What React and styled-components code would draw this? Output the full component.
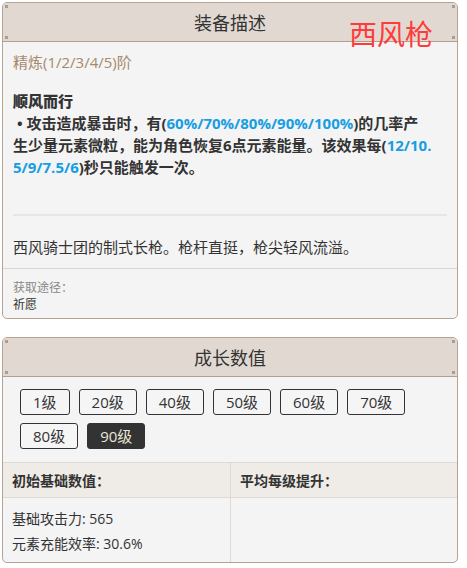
import styled, { createGlobalStyle } from "styled-components";

const GlobalStyle = createGlobalStyle`
    body {
        margin: 0;
        background: #fff;
        font-family: "Open Sans", "Noto Sans CJK SC", sans-serif;
        color: #333;
    }
`;

const levels = ["1级", "20级", "40级", "50级", "60级", "70级", "80级", "90级"];

const Panel = function ({ title, children }) {
    return <Card>
        <Header>
            <Dot $top $left />
            <Dot $left />
            <Dot $top />
            <Dot />
            {title}
        </Header>
        {children}
    </Card>
}

const App = function () {
    const active = "90级";

    return <Page>
        <GlobalStyle />
        <Panel title="装备描述">
            <Body>
                <Refine>精炼(1/2/3/4/5)阶</Refine>
                <Effect>
                    <strong>顺风而行</strong>
                    <br />
                    {"\u00a0• "}攻击造成暴击时，有(<Blue>60%/70%/80%/90%/100%</Blue>)的几率产<br />
                    生少量元素微粒，能为角色恢复6点元素能量。该效果每(<Blue>12/10.<br />
                    5/9/7.5/6</Blue>)秒只能触发一次。
                </Effect>
                <Divider />
                <Story>西风骑士团的制式长枪。枪杆直挺，枪尖轻风流溢。</Story>
            </Body>
            <Source>
                <span className="label">获取途径：</span>
                <span>祈愿</span>
            </Source>
        </Panel>
        <Panel title="成长数值">
            <LevelBar>
                {levels.map((lv) => (
                    <LevelButton key={lv} $active={lv === active}>{lv}</LevelButton>
                ))}
            </LevelBar>
            <StatTable>
                <StatHead>初始基础数值：</StatHead>
                <StatHead>平均每级提升：</StatHead>
                <StatCell>
                    <div>基础攻击力: 565</div>
                    <div>元素充能效率: 30.6%</div>
                </StatCell>
                <StatCell />
            </StatTable>
        </Panel>
        <WeaponName>西风枪</WeaponName>
    </Page>
}

export default App;

const Page = styled.div`
    position: relative;
    width: 456px;
    padding: 2px;
    display: flex;
    flex-direction: column;
    gap: 18px;
`

const Card = styled.section`
    border: 1px solid #b8a293;
    border-radius: 5px;
    background: #f4f4f4;
    overflow: hidden;
`

const Header = styled.div`
    position: relative;
    height: 38px;
    background: #e1d9d1;
    border-bottom: 1px solid #b39d8e;
    display: flex;
    align-items: center;
    justify-content: center;
    font-size: 18px;
    color: #333;
`

const Dot = styled.i`
    position: absolute;
    width: 3px;
    height: 3px;
    background: #a89e95;
    ${({ $top }) => ($top ? "top: 2px;" : "bottom: 2px;")}
    ${({ $left }) => ($left ? "left: 2px;" : "right: 2px;")}
`

const Body = styled.div`
    padding: 10px 10px 10px;
    font-size: 15px;
`

const Refine = styled.div`
    line-height: 21px;
    color: #a6896b;
`

const Effect = styled.p`
    margin: 17px 0 0;
    line-height: 22px;
    font-weight: 700;
    color: #333;
`

const Blue = styled.span`
    color: #179de2;
`

const Divider = styled.hr`
    margin: 36px 0 0;
    border: none;
    height: 2px;
    background: #e6e6e6;
`

const Story = styled.p`
    margin: 21px 0 0;
    line-height: 21px;
    color: #333;
`

const Source = styled.div`
    border-top: 1px solid #dcd6d0;
    padding: 10px 10px 5px;
    display: flex;
    flex-direction: column;
    font-size: 12px;
    line-height: 17px;
    color: #333;

    .label {
        color: #888;
    }
`

const LevelBar = styled.div`
    display: flex;
    flex-wrap: wrap;
    gap: 8px 9px;
    padding: 12px 17px 13px;
    border-bottom: 1px solid #e0d8d2;
`

const LevelButton = styled.button`
    height: 26px;
    padding: 0 12px;
    border: 1px solid #333;
    border-radius: 3px;
    font-family: inherit;
    font-size: 15px;
    line-height: 24px;
    cursor: pointer;
    background: ${({ $active }) => ($active ? "#333" : "#f5f5f5")};
    color: ${({ $active }) => ($active ? "#ece5d8" : "#333")};
`

const StatTable = styled.div`
    display: grid;
    grid-template-columns: 227px 1fr;
`

const StatHead = styled.div`
    height: 34px;
    display: flex;
    align-items: center;
    padding: 0 9px;
    background: #efebe6;
    border-bottom: 1px solid #e0d8d2;
    font-size: 14px;
    font-weight: 700;

    & + & {
        border-left: 1px solid #e0d8d2;
    }
`

const StatCell = styled.div`
    padding: 8px 9px 6px;
    font-size: 14px;
    line-height: 25px;

    & + & {
        border-left: 1px solid #e0d8d2;
    }
`

const WeaponName = styled.div`
    position: absolute;
    top: 15px;
    left: 349px;
    font-family: "Noto Sans CJK SC", sans-serif;
    font-size: 28px;
    line-height: 36px;
    color: #ff3b3b;
`
